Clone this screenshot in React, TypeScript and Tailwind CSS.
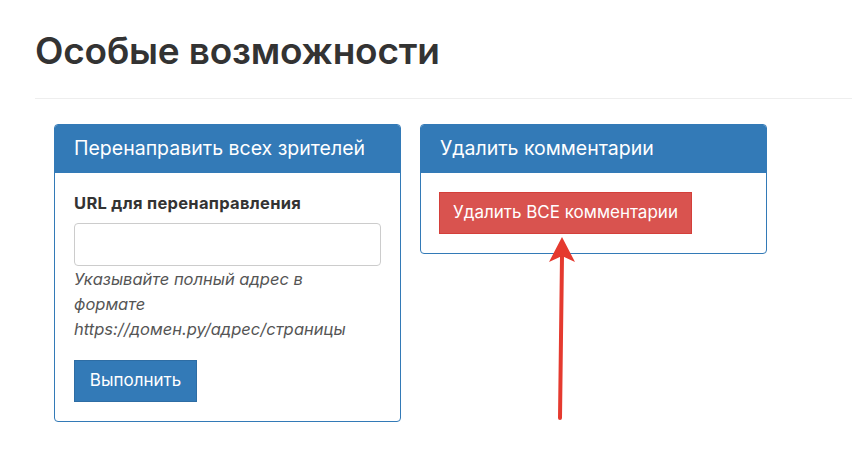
import React from "react";

export default function App() {
  return (
    <div className="relative w-[852px] h-[476px] bg-white overflow-hidden" style={{ fontFamily: "Inter, 'Noto Sans', sans-serif" }}>
      <div className="pl-[35px]">
        <h1 className="pt-[28px] pb-[24px] text-[37px] leading-[46px] font-semibold text-[#333] tracking-[-0.2px]">Особые возможности</h1>
        <div className="h-px bg-[#eeeeee]" />
        <div className="flex gap-[19px] pl-[19px] pt-[25px] items-start">
          <div className="w-[347px] border border-[#337ab7] rounded-[4px] overflow-hidden">
            <div className="h-[48px] bg-[#337ab7] flex items-center px-[19px] text-white text-[19.5px]">Перенаправить всех зрителей</div>
            <div className="px-[19px] pt-[19px] pb-[19px]">
              <div className="text-[16.5px] leading-[23px] font-bold text-[#333] mb-[8px] tracking-[0.3px]">URL для перенаправления</div>
              <div className="h-[43px] w-[307px] border border-[#cccccc] rounded-[4px] bg-white" />
              <div className="italic text-[16.5px] leading-[25px] text-[#555] w-[300px] pt-[1px]">Указывайте полный адрес в формате <span className="whitespace-nowrap">https://домен.ру/адрес/страницы</span></div>
              <button className="mt-[18px] h-[42px] w-[123px] bg-[#337ab7] border border-[#2e6da4] text-white text-[17px] flex items-center justify-center">Выполнить</button>
            </div>
          </div>
          <div className="w-[347px] border border-[#337ab7] rounded-[4px] overflow-hidden">
            <div className="h-[48px] bg-[#337ab7] flex items-center px-[19px] text-white text-[19.5px]">Удалить комментарии</div>
            <div className="px-[18px] pt-[19px] pb-[19px]">
              <button className="h-[42px] w-[253px] bg-[#d9534f] border border-[#d43f3a] text-white text-[17px] flex items-center justify-center">Удалить ВСЕ комментарии</button>
            </div>
          </div>
        </div>
      </div>
      <svg className="absolute left-0 top-0" width="852" height="476" viewBox="0 0 852 476">
        <line x1="560" y1="418" x2="562" y2="256" stroke="#e53a2f" strokeWidth="4" strokeLinecap="round" />
        <polygon points="562,237 575,262 562,256 549,262" fill="#e53a2f" />
      </svg>
    </div>
  );
}
